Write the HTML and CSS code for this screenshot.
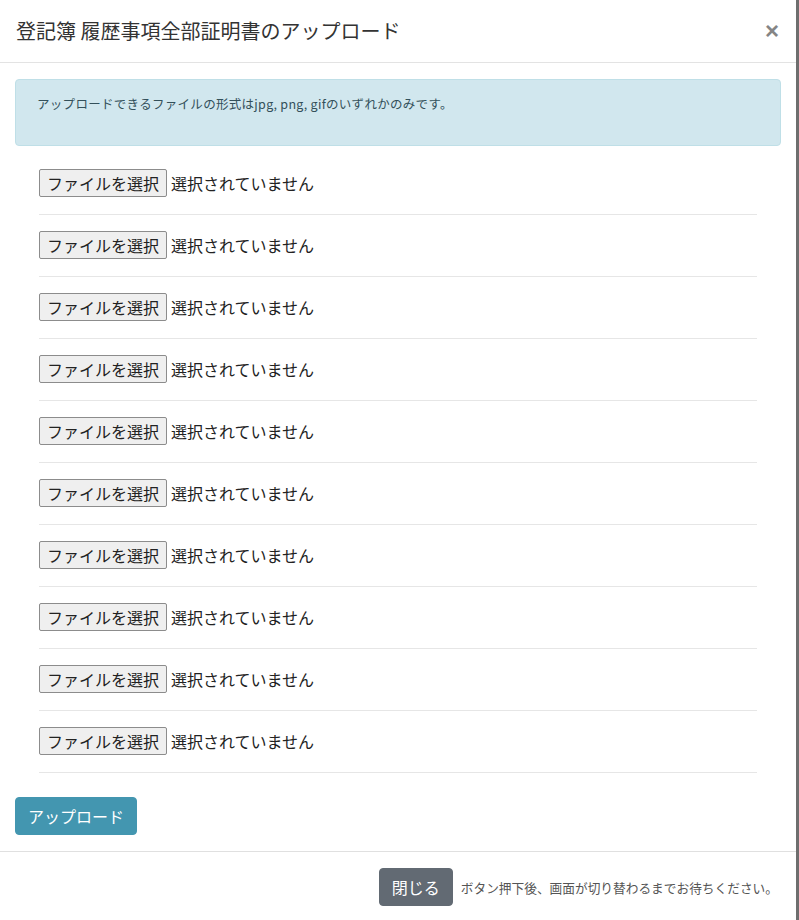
FILE: index.html
```html
<!DOCTYPE html>
<html lang="ja">
<head>
    <meta charset="UTF-8">
    <meta name="viewport" content="width=device-width, initial-scale=1.0">
    <title>登記簿 履歴事項全部証明書のアップロード</title>
    <link rel="stylesheet" href="styles.css">
</head>
<body>
    <div class="modal">
        <div class="modal-header">
            <h4 class="modal-title">登記簿 履歴事項全部証明書のアップロード</h4>
            <button class="close" type="button">&times;</button>
        </div>
        <form class="modal-body">
            <div class="alert">
                <p>アップロードできるファイルの形式はjpg, png, gifのいずれかのみです。</p>
            </div>
            <div class="file-list">
                <label class="file-row"><input type="file" accept="image/*"><span class="file-btn">ファイルを選択</span><span class="file-name">選択されていません</span></label>
                <label class="file-row"><input type="file" accept="image/*"><span class="file-btn">ファイルを選択</span><span class="file-name">選択されていません</span></label>
                <label class="file-row"><input type="file" accept="image/*"><span class="file-btn">ファイルを選択</span><span class="file-name">選択されていません</span></label>
                <label class="file-row"><input type="file" accept="image/*"><span class="file-btn">ファイルを選択</span><span class="file-name">選択されていません</span></label>
                <label class="file-row"><input type="file" accept="image/*"><span class="file-btn">ファイルを選択</span><span class="file-name">選択されていません</span></label>
                <label class="file-row"><input type="file" accept="image/*"><span class="file-btn">ファイルを選択</span><span class="file-name">選択されていません</span></label>
                <label class="file-row"><input type="file" accept="image/*"><span class="file-btn">ファイルを選択</span><span class="file-name">選択されていません</span></label>
                <label class="file-row"><input type="file" accept="image/*"><span class="file-btn">ファイルを選択</span><span class="file-name">選択されていません</span></label>
                <label class="file-row"><input type="file" accept="image/*"><span class="file-btn">ファイルを選択</span><span class="file-name">選択されていません</span></label>
                <label class="file-row"><input type="file" accept="image/*"><span class="file-btn">ファイルを選択</span><span class="file-name">選択されていません</span></label>
            </div>
            <button class="btn btn-upload" type="button">アップロード</button>
        </form>
        <div class="modal-footer">
            <button class="btn btn-close" type="button">閉じる</button>
            <span class="footer-note">ボタン押下後、画面が切り替わるまでお待ちください。</span>
        </div>
    </div>
</body>
</html>
```

FILE: styles.css
```css
body {
    margin: 0;
    background-color: #6e6e6e;
    font-family: 'Noto Sans CJK JP', 'Noto Sans', sans-serif;
    color: #333333;
}

.modal {
    width: 796px;
    min-height: 920px;
    background-color: #ffffff;
}

.modal-header {
    display: flex;
    align-items: center;
    justify-content: space-between;
    padding: 15px 15px 15px 16px;
    border-bottom: 1px solid #e3e3e3;
}

.modal-title {
    margin: 0;
    font-size: 20px;
    font-weight: normal;
    line-height: 32px;
    color: #333333;
}

.close {
    padding: 0;
    margin-right: 2px;
    background: none;
    border: none;
    font-family: 'Liberation Sans', sans-serif;
    font-size: 24px;
    font-weight: bold;
    line-height: 1;
    color: #858585;
    cursor: pointer;
}

.modal-body {
    padding: 16px 15px 16px 15px;
}

.alert {
    padding: 15px 21px;
    background-color: #d1e7ee;
    border: 1px solid #bfdfe7;
    border-radius: 4px;
    color: #33505a;
    font-size: 12.5px;
    letter-spacing: 0.3px;
}

.alert p {
    margin: 0 0 17px;
    line-height: 18px;
}

.file-list {
    margin: 7px 24px 0;
}

.file-row {
    display: flex;
    align-items: center;
    padding: 16px 0 17px;
    border-bottom: 1px solid #e6e6e6;
    font-size: 16px;
    cursor: pointer;
}

.file-row input {
    display: none;
}

.file-btn {
    box-sizing: border-box;
    height: 28px;
    padding: 0 7px;
    line-height: 26px;
    background-color: #efefef;
    border: 1px solid #8c8c8c;
    border-radius: 2px;
    color: #222222;
}

.file-name {
    margin-left: 4px;
    color: #222222;
}

.btn {
    height: 38px;
    padding: 6px 12px;
    border: 1px solid transparent;
    border-radius: 4px;
    font-family: inherit;
    font-size: 16px;
    line-height: 24px;
    color: #ffffff;
    cursor: pointer;
}

.btn-upload {
    margin-top: 24px;
    background-color: #4396b0;
    border-color: #4396b0;
}

.modal-footer {
    display: flex;
    align-items: center;
    justify-content: flex-end;
    padding: 16px 18px 16px 15px;
    border-top: 1px solid #e0e0e0;
}

.btn-close {
    background-color: #626a73;
    border-color: #626a73;
}

.footer-note {
    margin-left: 8px;
    font-size: 12.7px;
    color: #555555;
}
```
